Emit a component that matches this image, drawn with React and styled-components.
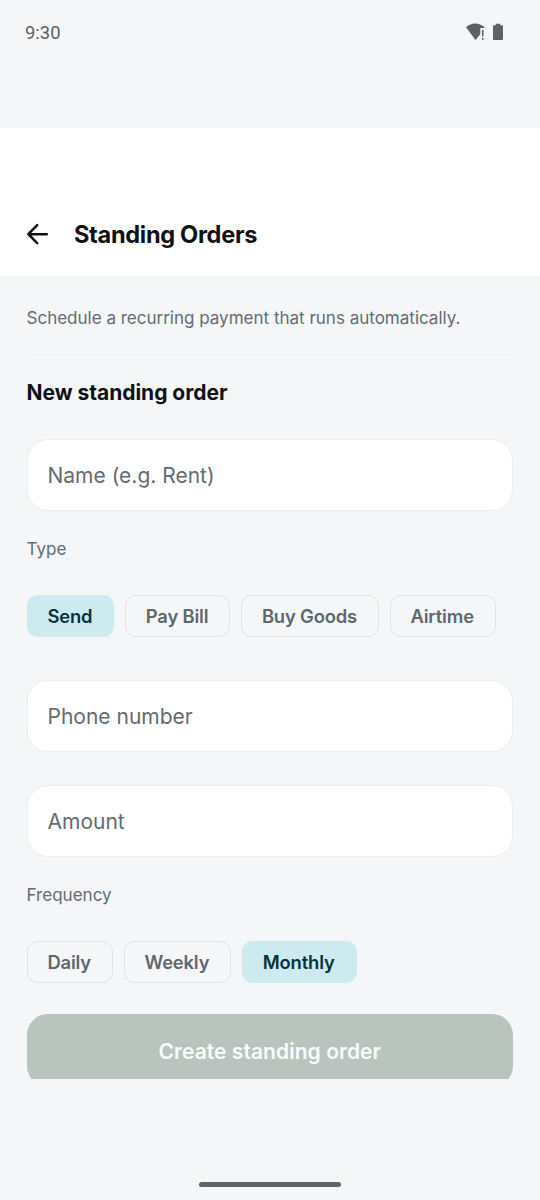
import React from "react";
import styled, { createGlobalStyle } from "styled-components";

const GlobalStyle = createGlobalStyle`
  * { box-sizing: border-box; }
  body { margin: 0; background: #f4f6f8; }
  button, input { font: inherit; margin: 0; }
`;

const Screen = styled.div`
  width: 540px;
  height: 1200px;
  display: flex;
  flex-direction: column;
  overflow: hidden;
  background: #f4f6f8;
  color: #0f1214;
  font-family: Inter, "Liberation Sans", sans-serif;
`;

const StatusBar = styled.div`
  height: 128px;
  flex: none;
  display: flex;
  align-items: flex-start;
  justify-content: space-between;
  padding: 22px 37px 0 25px;
  color: #5e6063;
`;

const Clock = styled.span`
  font: 400 18.4px/22px Roboto, sans-serif;
`;

const StatusIcons = styled.div`
  display: flex;
  gap: 8px;
  padding-top: 1px;
  svg { display: block; }
`;

const Header = styled.header`
  height: 148px;
  flex: none;
  display: flex;
  align-items: center;
  gap: 25px;
  padding: 64px 26px 0 26px;
  background: #fff;
`;

const BackButton = styled.button`
  display: block;
  width: 23px;
  height: 24px;
  padding: 0;
  border: 0;
  background: none;
  color: inherit;
  svg { display: block; }
`;

const Title = styled.h1`
  margin: 0;
  padding-top: 2px;
  font-size: 23.6px;
  line-height: 32px;
  font-weight: 700;
  letter-spacing: -0.33px;
`;

const Content = styled.main`
  height: 803px;
  flex: none;
  overflow: hidden;
  display: flex;
  flex-direction: column;
  padding: 30px 27px 0 26.5px;
`;

const Intro = styled.p`
  flex: none;
  margin: 0;
  padding-bottom: 24px;
  border-bottom: 1px solid #edf0f2;
  font-size: 17.06px;
  line-height: 24px;
  letter-spacing: -0.02px;
  color: #646c73;
`;

const SectionTitle = styled.h2`
  flex: none;
  margin: 24px 0 32px;
  font-size: 21px;
  line-height: 28px;
  font-weight: 700;
  letter-spacing: -0.02px;
`;

const Field = styled.input`
  flex: none;
  width: 100%;
  height: 72px;
  margin-bottom: ${(p) => p.$after}px;
  padding: 0 20px;
  border: 1px solid #ebeef0;
  border-radius: 21px;
  background: #fff;
  outline: none;
  font-size: 21px;
  &::placeholder { color: #646b72; opacity: 1; }
`;

const GroupLabel = styled.span`
  flex: none;
  font-size: 17.06px;
  line-height: 24px;
  color: #646c73;
`;

const ChipRow = styled.div`
  flex: none;
  display: flex;
  gap: 10.5px;
  margin: 33.5px 0 ${(p) => p.$after}px;
`;

const Chip = styled.button`
  height: 42px;
  padding: 1px 21.1px 0 19.9px;
  border: 1px solid ${(p) => (p.$selected ? "#cdeaf0" : "#dde2e5")};
  border-radius: 10.5px;
  background: ${(p) => (p.$selected ? "#cdeaf0" : "transparent")};
  color: ${(p) => (p.$selected ? "#06323a" : "#5f676e")};
  font-size: 18.4px;
  line-height: 26px;
  font-weight: 600;
  letter-spacing: -0.17px;
  white-space: nowrap;
`;

const SubmitButton = styled.button`
  flex: none;
  height: 73px;
  padding: 1px 0 0;
  border: 0;
  border-radius: 21px;
  background: #b8c4bd;
  color: #fafcfb;
  font-size: 21px;
  font-weight: 600;
  letter-spacing: 0.05px;
`;

const NavigationArea = styled.footer`
  flex: 1;
  display: flex;
  align-items: flex-end;
  justify-content: center;
  padding-bottom: 13px;
`;

const HomeHandle = styled.div`
  width: 142px;
  height: 5px;
  border-radius: 3px;
  background: #626467;
`;

const types = ["Send", "Pay Bill", "Buy Goods", "Airtime"];
const frequencies = ["Daily", "Weekly", "Monthly"];

function Chips({ items, selected, after }) {
  return (
    <ChipRow $after={after}>
      {items.map((item) => (
        <Chip key={item} type="button" $selected={item === selected}>{item}</Chip>
      ))}
    </ChipRow>
  );
}

export default function App() {
  return (
    <Screen>
      <GlobalStyle />
      <StatusBar>
        <Clock>9:30</Clock>
        <StatusIcons>
          <svg width="19" height="18" viewBox="0 0 19 18" fill="currentColor">
            <path d="M0 4.2C5.5-.6 13-.6 18.5 4.2V5h-4.2v6.2L9.5 17Z" />
            <path d="M16 7h1.5v6.5H16zM16 15h1.5v1.7H16z" />
          </svg>
          <svg width="10" height="18" viewBox="0 0 10 18" fill="currentColor">
            <path d="M2.8.7h4.4v1.5H9q1 0 1 1v12.8q0 1-1 1H1q-1 0-1-1V3.2q0-1 1-1h1.8Z" />
          </svg>
        </StatusIcons>
      </StatusBar>
      <Header>
        <BackButton type="button" aria-label="Back">
          <svg width="23" height="24" viewBox="0 0 23 24" fill="none" stroke="currentColor" strokeWidth="2.5" strokeLinecap="round" strokeLinejoin="round">
            <path d="M20.8 12.2H2.3M11.2 3.2 2.3 12.2l8.9 9" />
          </svg>
        </BackButton>
        <Title>Standing Orders</Title>
      </Header>
      <Content>
        <Intro>Schedule a recurring payment that runs automatically.</Intro>
        <SectionTitle>New standing order</SectionTitle>
        <Field placeholder="Name (e.g. Rent)" $after={26} />
        <GroupLabel>Type</GroupLabel>
        <Chips items={types} selected="Send" after={43.5} />
        <Field placeholder="Phone number" $after={33} />
        <Field placeholder="Amount" $after={26} />
        <GroupLabel>Frequency</GroupLabel>
        <Chips items={frequencies} selected="Monthly" after={31.5} />
        <SubmitButton type="button">Create standing order</SubmitButton>
      </Content>
      <NavigationArea>
        <HomeHandle />
      </NavigationArea>
    </Screen>
  );
}
